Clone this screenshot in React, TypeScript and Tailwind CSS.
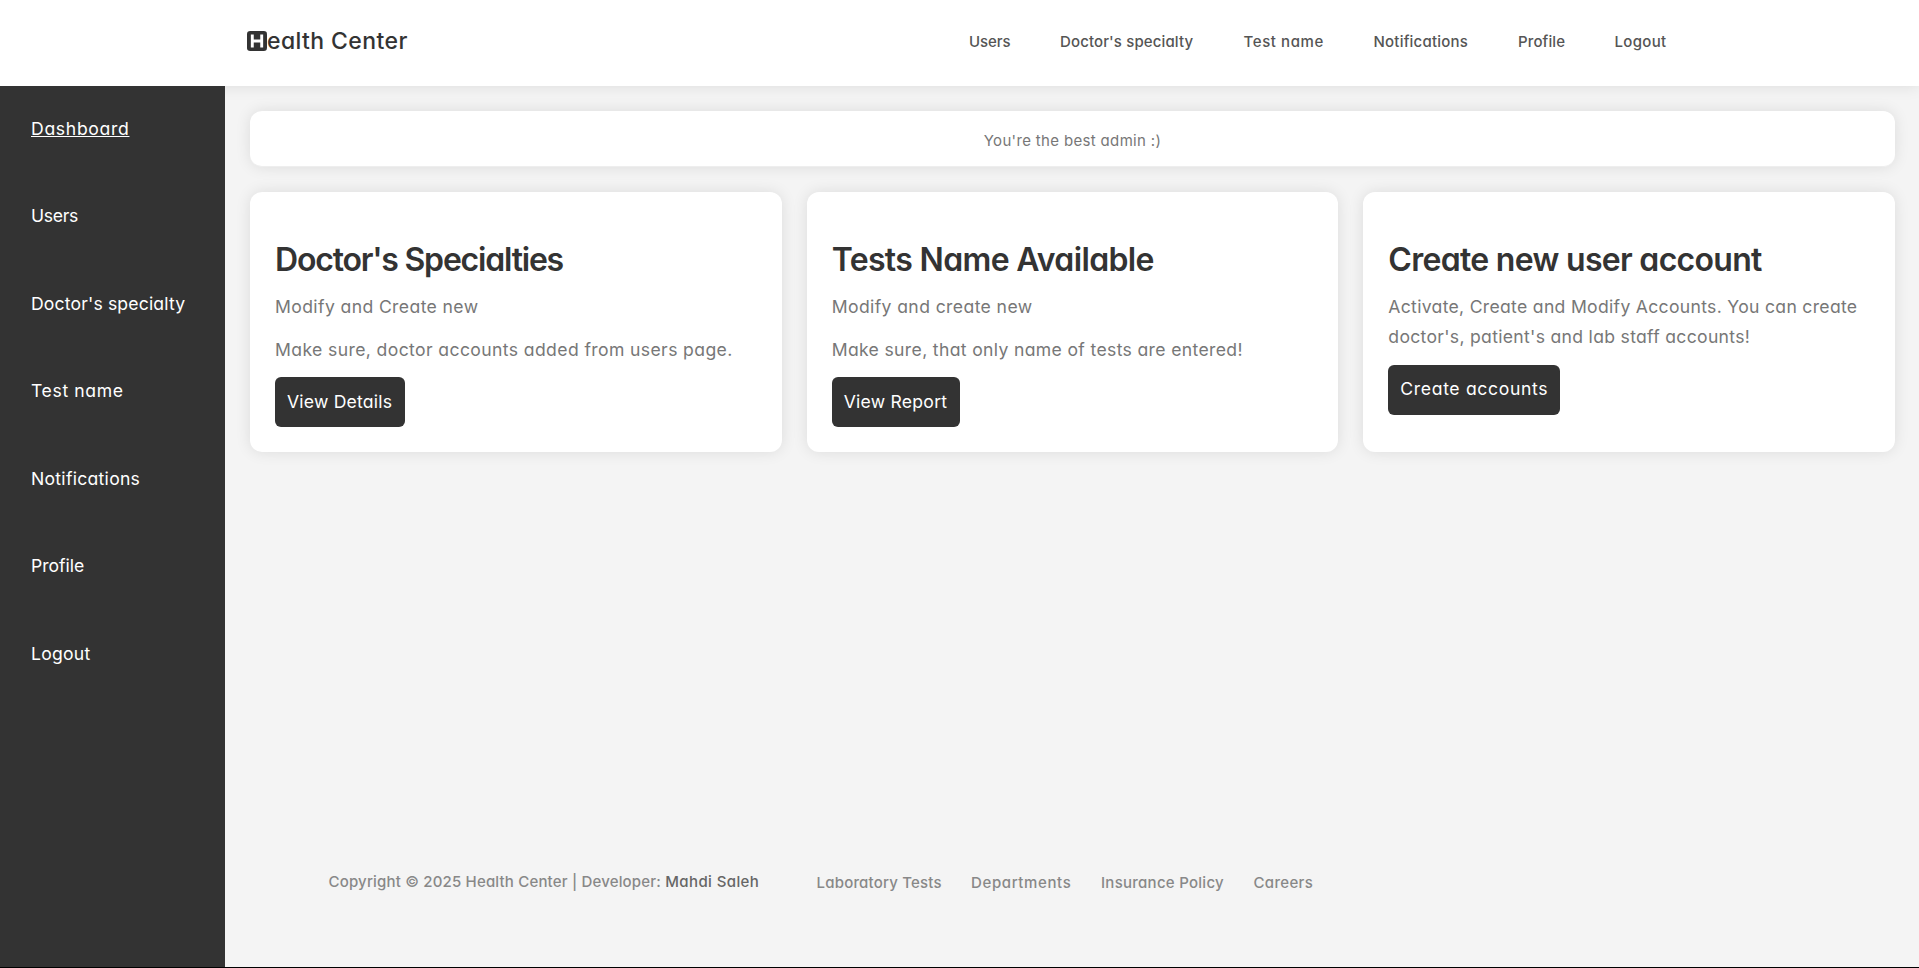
const navLinks = [
  { label: "Users", style: "w-[41px] tracking-[-0.1px]" },
  { label: "Doctor's specialty", style: "w-[133.5px] tracking-[0.12px]" },
  { label: "Test name", style: "w-[80px] tracking-[0.6px]" },
  { label: "Notifications", style: "w-[94.5px] tracking-[0.22px]" },
  { label: "Profile", style: "w-[46.5px] tracking-[0.13px]" },
  { label: "Logout", style: "w-[52px] tracking-[0.32px]" },
];

const sideLinks = [
  { label: "Dashboard", style: "tracking-[0.68px] underline decoration-1 underline-offset-[1px] [text-decoration-skip-ink:none]" },
  { label: "Users", style: "tracking-[-0.3px]" },
  { label: "Doctor's specialty", style: "tracking-[0.15px]" },
  { label: "Test name", style: "tracking-[0.62px]" },
  { label: "Notifications", style: "tracking-[0.27px]" },
  { label: "Profile", style: "tracking-[-0.04px]" },
  { label: "Logout", style: "tracking-[0.24px]" },
];

const cards = [
  {
    title: "Doctor's Specialties",
    titleStyle: "tracking-[-1.2px]",
    lines: [
      { text: "Modify and Create new", style: "tracking-[0.38px]" },
      { text: "Make sure, doctor accounts added from users page.", style: "tracking-[0.38px]" },
    ],
    action: "View Details",
    actionStyle: "w-[130px] tracking-[0.2px]",
  },
  {
    title: "Tests Name Available",
    titleStyle: "tracking-[-0.65px]",
    lines: [
      { text: "Modify and create new", style: "tracking-[0.39px]" },
      { text: "Make sure, that only name of tests are entered!", style: "tracking-[0.34px]" },
    ],
    action: "View Report",
    actionStyle: "w-[128px] tracking-[0.24px]",
  },
  {
    title: "Create new user account",
    titleStyle: "tracking-[-0.7px]",
    lines: [
      {
        text: "Activate, Create and Modify Accounts. You can create doctor's, patient's and lab staff accounts!",
        style: "tracking-[0.3px]",
      },
    ],
    action: "Create accounts",
    actionStyle: "w-[172px] tracking-[0.65px]",
  },
];

const footerLinks = [
  { label: "Laboratory Tests", style: "w-[125.5px] tracking-[0.2px]" },
  { label: "Departments", style: "w-[101px] tracking-[0.62px]" },
  { label: "Insurance Policy", style: "w-[123.5px] tracking-[0.27px]" },
  { label: "Careers", style: "w-[62px] tracking-[0.32px]" },
];

function LogoMark() {
  return (
    <svg viewBox="0 0 20 20" className="h-5 w-5 shrink-0">
      <rect width="20" height="20" rx="3.2" fill="#333" />
      <path d="M5.3 3.4v13.2M14.7 3.4v13.2M5.3 10h9.4" stroke="#fff" strokeWidth="2.9" fill="none" />
    </svg>
  );
}

export default function App() {
  return (
    <div className="flex h-[968px] flex-col border-b border-black bg-[#f4f4f4] font-['Inter',sans-serif] text-[17.6px] text-[#777] [font-feature-settings:'cv11']">
      <header className="relative z-10 flex h-[86px] shrink-0 items-center bg-white pl-[247px] shadow-[0_0_15px_rgba(0,0,0,0.1)]">
        <a className="flex w-[722px] items-center pb-1 text-[23px] font-[450] tracking-[0.4px] text-[#333]">
          <LogoMark />
          ealth Center
        </a>
        <nav className="flex gap-[50px] pb-0.5 text-[15px] font-[450] text-[#555]">
          {navLinks.map((l) => (
            <a key={l.label} className={`shrink-0 whitespace-nowrap ${l.style}`}>
              {l.label}
            </a>
          ))}
        </nav>
      </header>

      <div className="flex min-h-0 flex-1">
        <aside className="relative z-20 w-[225px] shrink-0 bg-[#333] pl-[31px] text-white">
          <ul className="-mt-px">
            {sideLinks.map((l) => (
              <li key={l.label} className="flex h-[87.5px] items-center">
                <a className={`whitespace-nowrap ${l.style}`}>{l.label}</a>
              </li>
            ))}
          </ul>
        </aside>

        <main className="flex flex-1 flex-col pt-[25px] pr-6 pl-[25px]">
          <div className="flex h-14 shrink-0 items-center justify-center rounded-[12px] border-b border-[#eee] bg-white pt-1.5 text-[15px] tracking-[0.34px] shadow-[0_0_15px_rgba(0,0,0,0.1)]">
            You're the best admin :)
          </div>

          <div className="mt-[25px] grid h-[260px] shrink-0 grid-cols-3 gap-[25px]">
            {cards.map((c) => (
              <section key={c.title} className="rounded-[12px] bg-white px-[25px] pt-11 shadow-[0_0_15px_rgba(0,0,0,0.1)]">
                <h2 className={`mb-[9px] whitespace-nowrap text-[32px] leading-[47px] font-semibold text-[#333] ${c.titleStyle}`}>
                  {c.title}
                </h2>
                {c.lines.map((p) => (
                  <p key={p.text} className={`mb-[12.7px] leading-[29.9px] ${p.style}`}>
                    {p.text}
                  </p>
                ))}
                <button className={`h-[50px] rounded-[6px] bg-[#333] px-3 text-left whitespace-nowrap text-white ${c.actionStyle}`}>
                  {c.action}
                </button>
              </section>
            ))}
          </div>

          <footer className="mt-auto mb-[73px] flex pl-[78.5px] text-[15px] leading-[22px] font-[450] text-[#888]">
            <p className="w-[488px] whitespace-nowrap">
              <span className="tracking-[0.18px]">Copyright © 2025 Health Center | Developer: </span>
              <span className="tracking-[0.4px] text-[#666]">Mahdi Saleh</span>
            </p>
            <ul className="flex gap-[29px] pt-px">
              {footerLinks.map((l) => (
                <li key={l.label} className={`shrink-0 whitespace-nowrap ${l.style}`}>
                  {l.label}
                </li>
              ))}
            </ul>
          </footer>
        </main>
      </div>
    </div>
  );
}
